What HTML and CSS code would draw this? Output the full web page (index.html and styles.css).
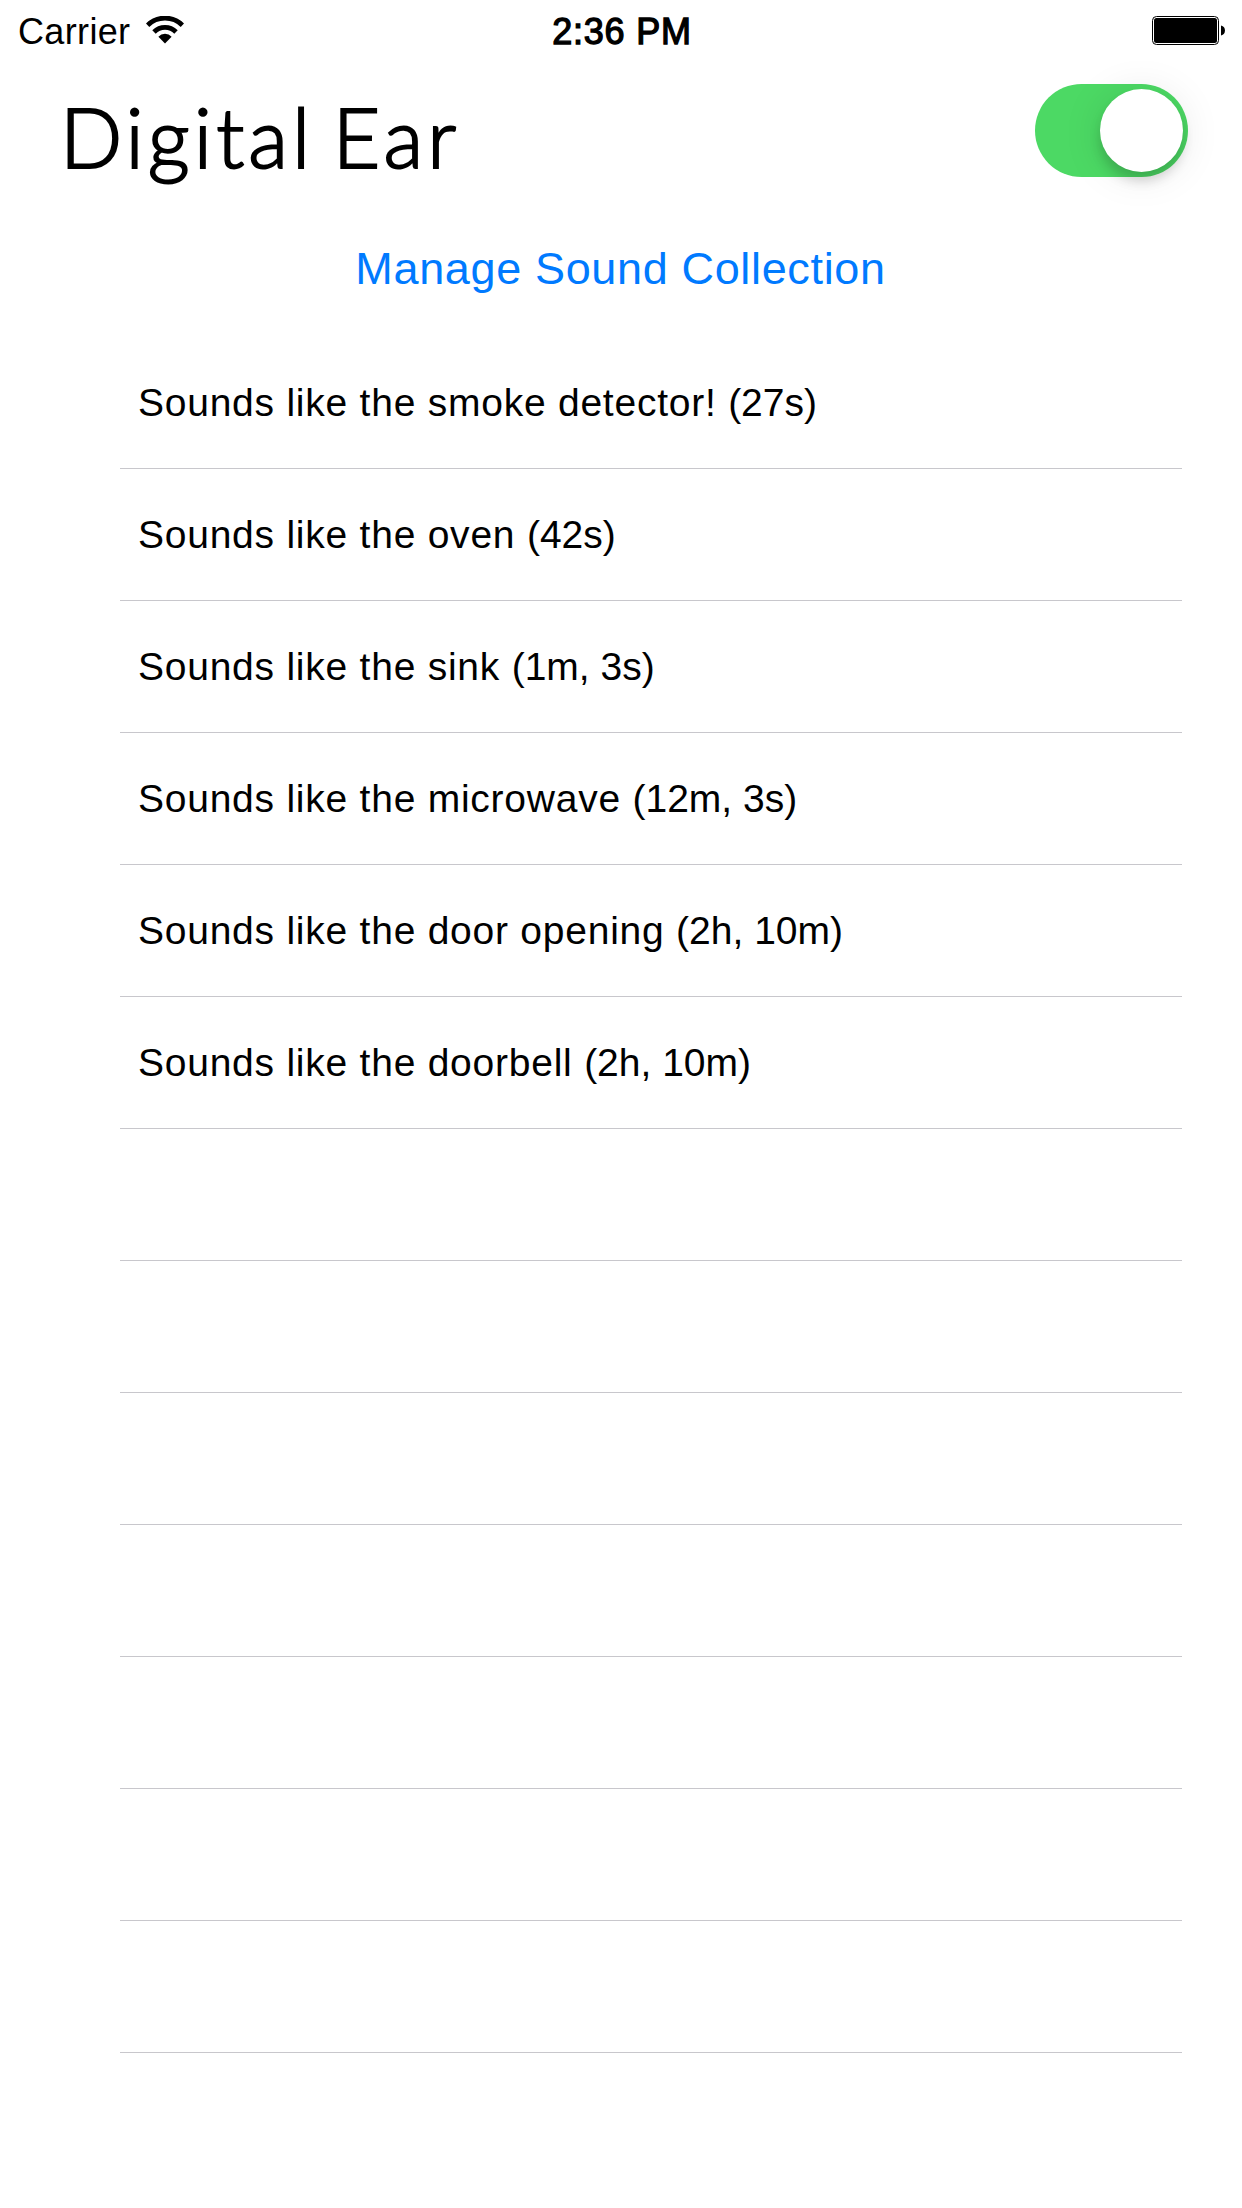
FILE: index.html
```html
<!DOCTYPE html>
<html lang="en">
<head>
<meta charset="utf-8">
<title>Digital Ear</title>
<link rel="stylesheet" href="styles.css">
</head>
<body>
<div class="status-bar">
  <div class="status-left">
    <span class="carrier">Carrier</span>
    <svg class="wifi" width="38" height="28" viewBox="0 0 38 28" aria-hidden="true">
      <g fill="none" stroke="#000" stroke-width="4.8">
        <path d="M1.6 9.2A24.8 24.8 0 0 1 36.4 9.2"/>
        <path d="M8 16A15.4 15.4 0 0 1 30 16"/>
      </g>
      <path d="M12.4 20.8A8.9 8.9 0 0 1 25.6 20.8L19 27.4Z"/>
    </svg>
  </div>
  <span class="time">2:36 PM</span>
  <div class="status-right">
    <svg class="battery" width="74" height="29" viewBox="0 0 74 29" aria-hidden="true">
      <rect x="0.5" y="0.5" width="66" height="28" rx="4" fill="none" stroke="#000"/>
      <rect x="2" y="2" width="63" height="25" rx="2.5"/>
      <path d="M69 9.5C74.3 10.5 74.3 18.5 69 19.5Z"/>
    </svg>
  </div>
</div>
<header class="header">
  <h1 class="title">Digital Ear</h1>
  <div class="switch" role="switch" aria-checked="true"><span class="knob"></span></div>
</header>
<a class="manage">Manage Sound Collection</a>
<ul class="sounds">
  <li class="row">Sounds like the smoke detector! <span class="ago">(27s)</span></li>
  <li class="row">Sounds like the oven <span class="ago">(42s)</span></li>
  <li class="row">Sounds like the sink <span class="ago">(1m, 3s)</span></li>
  <li class="row">Sounds like the microwave <span class="ago">(12m, 3s)</span></li>
  <li class="row">Sounds like the door opening <span class="ago">(2h, 10m)</span></li>
  <li class="row">Sounds like the doorbell <span class="ago">(2h, 10m)</span></li>
  <li class="row"></li>
  <li class="row"></li>
  <li class="row"></li>
  <li class="row"></li>
  <li class="row"></li>
  <li class="row"></li>
  <li class="row"></li>
</ul>
</body>
</html>
```
FILE: styles.css
```css
* {
  box-sizing: border-box;
}

body {
  margin: 0;
  min-height: 2208px;
  background: #fff;
  color: #000;
  font-family: "Liberation Sans", Arial, sans-serif;
}

.status-bar {
  display: grid;
  grid-template-columns: 1fr auto 1fr;
  align-items: center;
  height: 63px;
  padding: 0 16px 0 18px;
  font-size: 36px;
  line-height: 63px;
}

.status-left {
  display: flex;
  align-items: center;
  gap: 16px;
}

.carrier {
  letter-spacing: 0.35px;
}

.wifi {
  margin-bottom: 3px;
}

.time {
  letter-spacing: 0.8px;
  -webkit-text-stroke: 1.3px #000;
}

.status-right {
  display: flex;
  justify-content: flex-end;
}

.battery {
  margin-bottom: 2px;
}

.header {
  display: flex;
  justify-content: space-between;
  height: 146px;
  padding: 0 54px 0 60px;
}

.title {
  margin: 0;
  font-family: Lato, sans-serif;
  font-size: 82px;
  font-weight: 300;
  line-height: 147px;
  letter-spacing: 4.1px;
  word-spacing: -8px;
  -webkit-text-stroke: 2px #000;
}

.switch {
  display: flex;
  justify-content: flex-end;
  width: 153px;
  height: 93px;
  margin-top: 21px;
  padding: 5px;
  border-radius: 47px;
  background: #4cd964;
}

.knob {
  width: 83px;
  height: 83px;
  border-radius: 50%;
  background: #fff;
  box-shadow: 0 9px 12px rgba(0, 0, 0, 0.16), 0 3px 40px rgba(0, 0, 0, 0.1);
}

.manage {
  display: block;
  height: 119px;
  padding-right: 1px;
  color: #007aff;
  font-size: 45px;
  line-height: 119px;
  letter-spacing: 0.65px;
  text-align: center;
}

.sounds {
  margin: 9px 60px 0 120px;
  padding: 0;
  list-style: none;
}

.row {
  height: 132px;
  padding-left: 18px;
  border-bottom: 1px solid #c8c7cc;
  font-size: 39px;
  line-height: 131px;
  letter-spacing: 0.76px;
}

.ago {
  letter-spacing: 0;
}
```
